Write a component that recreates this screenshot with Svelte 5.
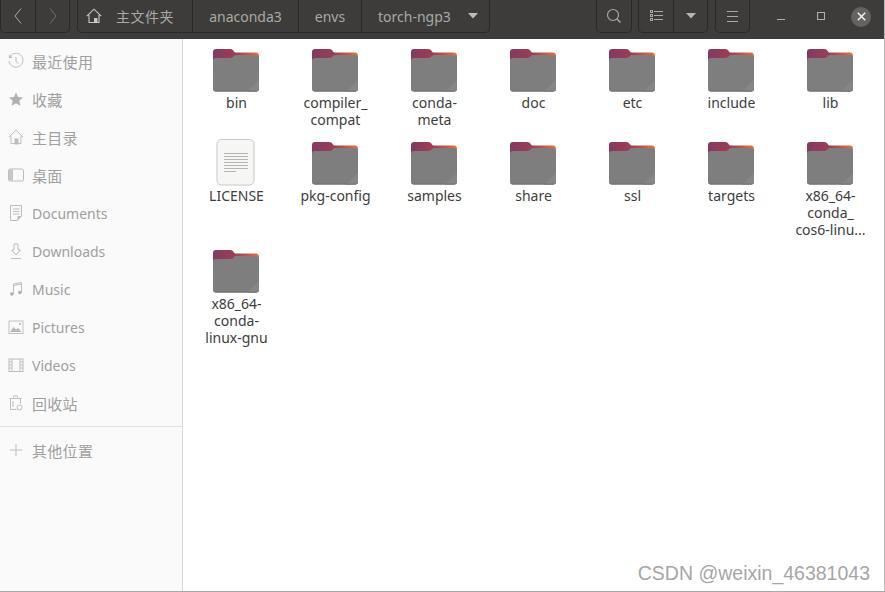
<script>
  const places = [
    { name: "最近使用", icon: "recent", cjk: true },
    { name: "收藏", icon: "star", cjk: true },
    { name: "主目录", icon: "home", cjk: true },
    { name: "桌面", icon: "desktop", cjk: true },
    { name: "Documents", icon: "doc" },
    { name: "Downloads", icon: "down" },
    { name: "Music", icon: "music" },
    { name: "Pictures", icon: "pic" },
    { name: "Videos", icon: "video" },
    { name: "回收站", icon: "trash", cjk: true },
  ];

  const files = [
    ["bin"],
    ["compiler_", "compat"],
    ["conda-", "meta"],
    ["doc"],
    ["etc"],
    ["include"],
    ["lib"],
    ["LICENSE"],
    ["pkg-config"],
    ["samples"],
    ["share"],
    ["ssl"],
    ["targets"],
    ["x86_64-", "conda_", "cos6-linu..."],
    ["x86_64-", "conda-", "linux-gnu"],
  ];
</script>

<div class="window">
  <header class="titlebar">
    <div class="group nav">
      <button class="seg nav-btn" aria-label="back">
        <svg width="10" height="16" viewBox="0 0 10 16"><path d="M8 0.5 2 8l6 7.5" fill="none" stroke="#a8a8a4" stroke-width="1"/></svg>
      </button>
      <button class="seg nav-btn" aria-label="forward">
        <svg width="10" height="16" viewBox="0 0 10 16"><path d="m2 0.500 6 7.500-6 7.500" fill="none" stroke="#6f6e6b" stroke-width="1"/></svg>
      </button>
    </div>
    <div class="group crumbs">
      <button class="seg crumb home">
        <svg width="16" height="16" viewBox="0 0 16 16"><path d="M.8 8.200 8 1.200l7.200 7M3 7v7.500h10V7" fill="none" stroke="#c8c8c4" stroke-width="1.100"/><rect x="8" y="10" width="3.500" height="5" fill="#c8c8c4"/></svg>
        <span class="cjk">主文件夹</span>
      </button>
      <button class="seg crumb c2">anaconda3</button>
      <button class="seg crumb c3">envs</button>
      <button class="seg crumb c4">
        torch-ngp3
        <svg class="caret" width="10" height="6" viewBox="0 0 10 6"><path d="M0 0h10L5 5.500z" fill="#bdbdb9"/></svg>
      </button>
    </div>
    <div class="spacer"></div>
    <div class="group search"><button class="seg tool" aria-label="search">
      <svg width="16" height="16" viewBox="0 0 16 16"><circle cx="7" cy="7" r="5.500" fill="none" stroke="#a8a8a4" stroke-width="1.200"/><path d="m11 11 3.500 3.500" stroke="#a8a8a4" stroke-width="1.500"/></svg>
    </button></div>
    <div class="group view">
      <button class="seg tool" aria-label="view list">
        <svg width="13" height="12" viewBox="0 0 13 12" fill="none" stroke="#a8a8a4"><rect x=".5" y=".5" width="2" height="2"/><rect x=".5" y="4.500" width="2" height="2"/><rect x=".5" y="8.500" width="2" height="2"/><path d="M4 1.500h9M4 5.500h9M4 9.500h9"/></svg>
      </button>
      <button class="seg tool" aria-label="view options">
        <svg width="10" height="6" viewBox="0 0 10 6"><path d="M0 0h10L5 5.500z" fill="#b4b4b0"/></svg>
      </button>
    </div>
    <div class="group menu"><button class="seg tool" aria-label="menu">
      <svg width="11" height="11" viewBox="0 0 11 11" stroke="#a8a8a4"><path d="M0 .5h11M0 5.500h11M0 10.500h11"/></svg>
    </button></div>
    <div class="wm">
      <span class="wm-btn"><svg width="9" height="9" viewBox="0 0 9 9"><path d="M0 7.500h8" stroke="#b0b0ac"/></svg></span>
      <span class="wm-btn"><svg width="9" height="9" viewBox="0 0 9 9"><rect x=".5" y=".5" width="7" height="7" fill="none" stroke="#b0b0ac"/></svg></span>
      <span class="wm-close"><svg width="9" height="9" viewBox="0 0 9 9"><path d="m.8.800 7.400 7.400M8.200.800.800 8.200" stroke="#f2f2f0" stroke-width="1.500"/></svg></span>
    </div>
  </header>

  <div class="body">
    <aside class="sidebar">
      <ul class="places">
        {#each places as p}
          <li class="place">
            <span class="ico">
              <svg width="16" height="16" viewBox="0 0 16 16" fill="none" stroke="#bdbdbd" stroke-width="1">
                {#if p.icon === "recent"}
                  <path d="M1.500 4.500A7 7 0 1 1 1 8"/><path d="M1 1.500v3.500h3.500" fill="#bdbdbd" stroke="none"/><path d="M8 4v4.500l2.500 2"/>
                {:else if p.icon === "star"}
                  <path d="m8 1.500 2 4.500 5 .5-3.700 3.300 1.100 4.900L8 12.200l-4.400 2.500 1.100-4.900L1 6.500 6 6z" fill="#b0b0b0" stroke="none"/>
                {:else if p.icon === "home"}
                  <path d="M.8 8.200 8 1.200l7.200 7M3 7v7.500h10V7"/><rect x="7" y="10" width="3" height="5" fill="#bdbdbd"/>
                {:else if p.icon === "desktop"}
                  <rect x=".5" y="2" width="15" height="12" rx="1.500"/><path d="M1 2.500h4v11H1z" fill="#c6c6c6" stroke="none"/>
                {:else if p.icon === "doc"}
                  <path d="M2.500.5h11v10.500l-4 4.500h-7zM5 4h6.500M5 6.500h6.500M5 9h6.500" /><path d="M9.500 15.500V11h4z" fill="#bdbdbd" stroke="none"/>
                {:else if p.icon === "down"}
                  <path d="M6 1h4v6h2.500L8 12 3.500 7H6zM3 15.500h10"/>
                {:else if p.icon === "music"}
                  <path d="M5.500 13V3l8-1.500V11.500M5.500 4.500l8-1.500" /><circle cx="3.800" cy="13" r="1.800" fill="#b0b0b0" stroke="none"/><circle cx="11.800" cy="11.500" r="1.800" fill="#b0b0b0" stroke="none"/>
                {:else if p.icon === "pic"}
                  <rect x="1" y="2" width="14" height="12.500" stroke="#c2c2c2"/><path d="M2 13l3.500-5 2.500 2.500 2-1.500 3.500 4z" fill="#b8b8b8" stroke="none"/><circle cx="12" cy="5" r="1.100" fill="#b8b8b8" stroke="none"/>
                {:else if p.icon === "video"}
                  <rect x="1" y="2" width="14" height="12.500"/><path d="M4 2v12.500M12 2v12.500M1 8h3M12 8h3M1 5h3M12 5h3M1 11h3M12 11h3"/>
                {:else if p.icon === "trash"}
                  <path d="M5.500 2.500V1h4v1.500M1.500 3.500h12M2.500 3.500v11h6M12.500 3.500v5M5 6v6"/><circle cx="11.500" cy="12.500" r="2.500"/>
                {/if}
              </svg>
            </span>
            <span class="label" class:cjk={p.cjk}>{p.name}</span>
          </li>
        {/each}
      </ul>
      <div class="sep"></div>
      <div class="place other">
        <span class="ico">
          <svg width="14" height="14" viewBox="0 0 14 14"><path d="M7 1v12M1 7h12" stroke="#bdbdbd"/></svg>
        </span>
        <span class="label cjk">其他位置</span>
      </div>
    </aside>

    <main class="files">
      {#each files as f}
        <div class="file">
          {#if f[0] === "LICENSE"}
            <svg class="thumb" width="48" height="48" viewBox="0 0 48 48">
              <rect x="5" y="-1.500" width="37" height="45.500" rx="4.500" fill="#f6f6f5" stroke="#c8c8c6"/>
              <path d="M12 12.500h24M12 15.500h24M12 18.500h24M12 21.500h24M12 24.500h24M12 27.500h24M12 30.500h12" stroke="#b4b4b2"/>
            </svg>
          {:else}
            <svg class="thumb" width="48" height="48" viewBox="0 0 48 48">
              <defs>
                <linearGradient id="tab" x1="0" x2="1" y1="0" y2="0">
                  <stop offset="0" stop-color="#823a62"/>
                  <stop offset=".5" stop-color="#9f3d54"/>
                  <stop offset="1" stop-color="#ec7136"/>
                </linearGradient>
              </defs>
              <path d="M4 1h14c2.500 0 3 1 4 2.500.4.700 1 1 2 1h20c2 0 3 1.500 3 3.500v10H1V4c0-2 1-3 3-3z" fill="url(#tab)"/>
              <path d="M4 10h14c2.500 0 3-1 4.500-2.500.5-.4 1-.5 2-.5H44c2 0 3 1 3 3v30.500c0 2-1 3-3 3H4c-2 0-3-1-3-3V13c0-2 1-3 3-3z" fill="#7e7e7e"/>
              <path d="m35 43.500 12-11.500v8.500c0 2-1 3-3 3z" fill="#868686"/>
              <path d="M1 40v.5c0 2 1 3 3 3h40c2 0 3-1 3-3V40c0 2-1 2.800-3 2.800H4c-2 0-3-.8-3-2.800z" fill="#666"/>
            </svg>
          {/if}
          <div class="name">
            {#each f as line}<div>{line}</div>{/each}
          </div>
        </div>
      {/each}
      <div class="mark">CSDN @weixin_46381043</div>
    </main>
  </div>
</div>

<style>
  :global(body) {
    margin: 0;
    background: #fff;
  }

  .window {
    width: 885px;
    height: 592px;
    display: flex;
    flex-direction: column;
    overflow: hidden;
    font-family: "Noto Sans", "Noto Sans CJK SC", sans-serif;
    box-sizing: border-box;
    border-right: 1px solid #b8b8b8;
    border-bottom: 1px solid #a8a8a8;
  }

  .titlebar {
    height: 39px;
    flex: none;
    display: flex;
    align-items: flex-start;
    background: #3d3c3a;
    box-sizing: border-box;
    gap: 7px;
  }

  .group {
    display: flex;
    height: 33px;
    box-sizing: border-box;
    border: 1px solid #2b2a29;
    border-top: 0;
    border-radius: 0 0 5px 5px;
  }

  .seg {
    height: 100%;
    margin: 0;
    padding: 0;
    display: flex;
    align-items: center;
    justify-content: center;
    background: none;
    border: 0;
    border-left: 1px solid #2b2a29;
    color: #a9a9a5;
    font: inherit;
    font-size: 14px;
    box-sizing: border-box;
  }

  .seg:first-child {
    border-left: 0;
  }

  .nav-btn {
    width: 34px;
  }

  .crumbs {
    width: 413px;
  }

  .crumb.home {
    width: 114px;
    gap: 14px;
    justify-content: flex-start;
    padding-left: 8px;
  }

  .c2 {
    width: 106px;
  }

  .c3 {
    width: 63px;
  }

  .c4 {
    flex: 1;
    justify-content: flex-start;
    padding-left: 16px;
    gap: 17px;
  }

  .spacer {
    flex: 1;
  }

  .tool {
    width: 34px;
  }

  .menu .tool {
    width: 33px;
  }

  .search {
    margin-right: -1px;
  }

  .wm {
    display: flex;
    align-items: center;
    height: 33px;
    margin-left: 20px;
    margin-right: 13px;
    gap: 31px;
  }

  .wm-btn {
    display: flex;
    width: 9px;
    justify-content: center;
  }

  .wm-close {
    width: 20px;
    height: 20px;
    border-radius: 50%;
    background: #636361;
    display: flex;
    align-items: center;
    justify-content: center;
    margin-left: -6px;
  }

  .body {
    flex: 1;
    display: flex;
    min-height: 0;
  }

  .sidebar {
    width: 183px;
    flex: none;
    background: #fafafa;
    border-right: 1px solid #d8d8d8;
    box-sizing: border-box;
    padding-top: 3px;
    color: #a0a0a0;
  }

  .places {
    list-style: none;
    margin: 0;
    padding: 0;
  }

  .place {
    height: 38px;
    display: flex;
    align-items: center;
    padding-left: 8px;
    gap: 8px;
    font-size: 14px;
  }

  .ico {
    width: 16px;
    height: 16px;
    display: flex;
    align-items: center;
    justify-content: center;
  }

  .cjk {
    font-family: "Noto Sans CJK SC", sans-serif;
    letter-spacing: .5px;
  }

  .label.cjk {
    font-size: 15px;
    letter-spacing: .3px;
  }

  .sep {
    height: 1px;
    background: #e2e2e2;
    margin-top: 4px;
  }

  .other {
    height: 46px;
  }

  .files {
    flex: 1;
    position: relative;
    display: grid;
    grid-template-columns: repeat(7, 99px);
    grid-template-rows: 93px 108px auto;
    align-content: start;
    padding: 9px 0 0 4px;
    background: #fff;
  }

  .file {
    display: flex;
    flex-direction: column;
    align-items: center;
  }

  .thumb {
    display: block;
    overflow: visible;
    margin-right: 1px;
  }

  .name {
    margin-top: -2px;
    font-size: 14px;
    line-height: 17px;
    color: #3d3d3d;
    text-align: center;
    white-space: nowrap;
  }

  .mark {
    position: absolute;
    right: 14px;
    bottom: 6px;
    font-family: "Liberation Sans", sans-serif;
    font-size: 19.5px;
    color: #a6a6a6;
  }
</style>
